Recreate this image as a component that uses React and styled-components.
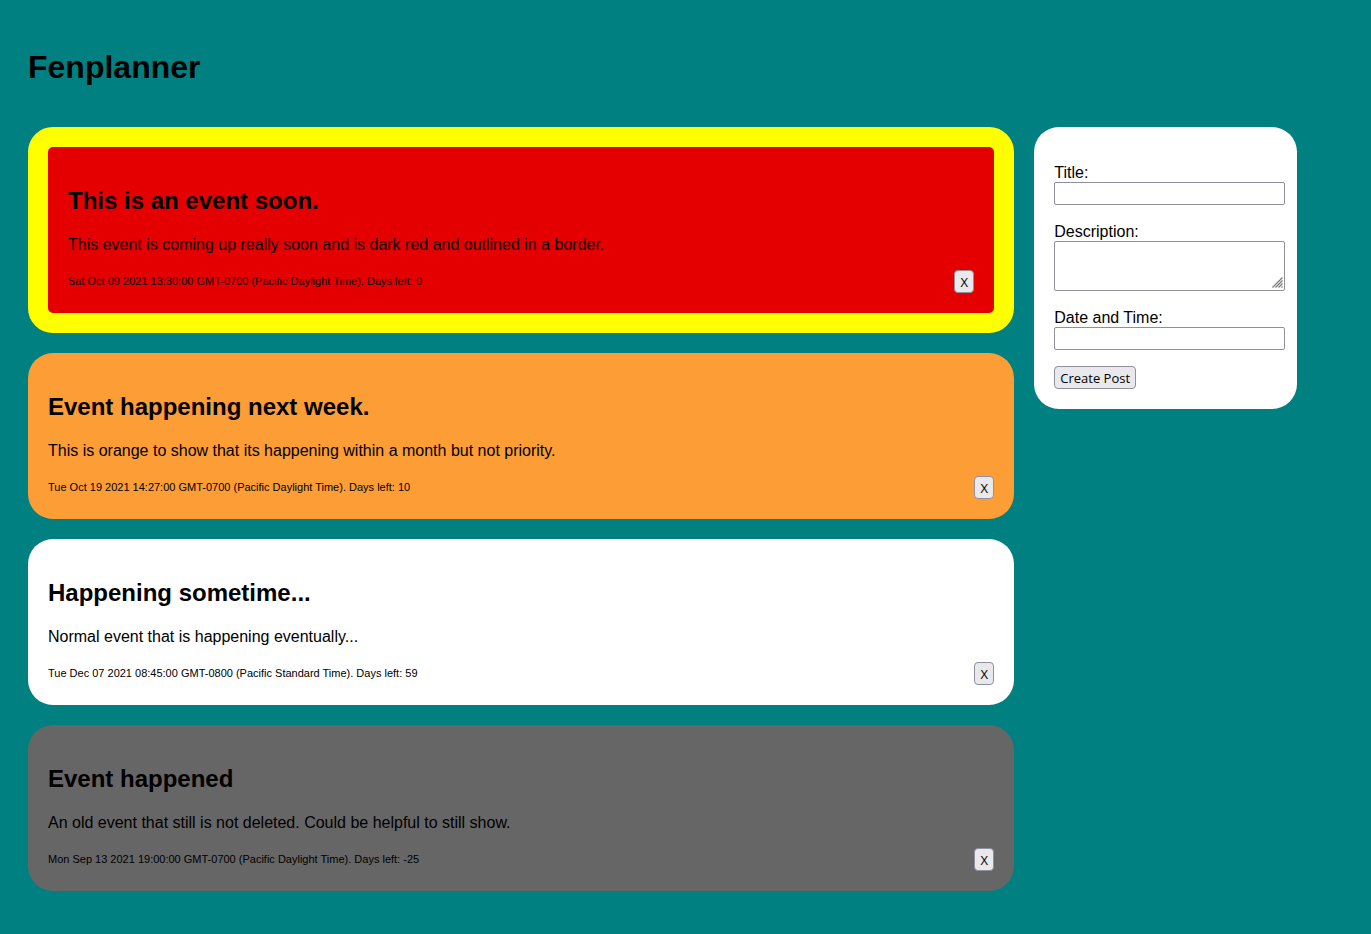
import React from "react";
import styled, { createGlobalStyle } from "styled-components";

const GlobalStyle = createGlobalStyle`
  body {
    margin: 8px;
    background: #008080;
    color: #000;
    font-family: "Liberation Sans", Arial, sans-serif;
    font-size: 16px;
    line-height: 19px;
  }
`;

const Page = styled.div`
  padding: 20px;
`;

const SiteTitle = styled.h1`
  margin: 21px 0 41px;
  font-size: 32px;
  line-height: 37px;
`;

const Columns = styled.div`
  display: flex;
  align-items: flex-start;
  gap: 20px;
`;

const EventList = styled.main`
  box-sizing: border-box;
  width: 75%;
  display: flex;
  flex-direction: column;
  gap: 20px;
`;

const tones = {
  soon: "#e40000",
  month: "#fd9d35",
  later: "#fff",
  past: "#666",
};

const EventCard = styled.article`
  padding: 20px;
  border: ${(p) => (p.$tone === "soon" ? "20px solid #ff0" : "none")};
  border-radius: 25px;
  background: ${(p) => tones[p.$tone]};
`;

const EventTitle = styled.h2`
  margin: 20px 0;
  font-size: 24px;
  line-height: 28px;
`;

const EventText = styled.p`
  margin: 0 0 16px;
`;

const EventFooter = styled.footer`
  display: flex;
  justify-content: space-between;
  align-items: center;
`;

const EventDate = styled.span`
  font-size: 11px;
`;

const Button = styled.button`
  box-sizing: border-box;
  height: 23px;
  min-width: 20px;
  padding: 1px 5px 0;
  border: 1px solid #8f8f9d;
  border-radius: 4px;
  background: #e9e9ed;
  color: #000;
  font-family: "Open Sans", "Noto Sans", sans-serif;
  font-size: 13px;
  line-height: 20px;
`;

const Sidebar = styled.aside`
  box-sizing: border-box;
  width: 20%;
  padding: 36px 20px 20px;
  border-radius: 25px;
  background: #fff;
`;

const Form = styled.form`
  display: flex;
  flex-direction: column;
  align-items: flex-start;
  gap: 16px;
`;

const Fields = styled.div`
  width: 100%;
  display: flex;
  flex-direction: column;
  gap: 17px;
`;

const Label = styled.label`
  display: block;
`;

const TextInput = styled.input`
  display: block;
  width: 100%;
  height: 19px;
  padding: 1px 3px;
  border: 1px solid #8f8f9d;
  border-radius: 2px;
  background: #fff;
  font: 13px "Noto Sans", sans-serif;
`;

const AreaWrap = styled.div`
  position: relative;
  width: calc(100% + 8px);
`;

const TextArea = styled.textarea`
  display: block;
  box-sizing: border-box;
  width: 100%;
  height: 50px;
  padding: 1px 3px;
  border: 1px solid #8f8f9d;
  border-radius: 2px;
  background: #fff;
  font: 13px "Liberation Mono", monospace;
  resize: vertical;

  &::-webkit-resizer {
    background: transparent;
  }
`;

const Grip = styled.svg`
  position: absolute;
  right: 2px;
  bottom: 3px;
  pointer-events: none;
`;

const events = [
  {
    tone: "soon",
    title: "This is an event soon.",
    text: "This event is coming up really soon and is dark red and outlined in a border.",
    date: "Sat Oct 09 2021 13:30:00 GMT-0700 (Pacific Daylight Time). Days left: 0",
  },
  {
    tone: "month",
    title: "Event happening next week.",
    text: "This is orange to show that its happening within a month but not priority.",
    date: "Tue Oct 19 2021 14:27:00 GMT-0700 (Pacific Daylight Time). Days left: 10",
  },
  {
    tone: "later",
    title: "Happening sometime...",
    text: "Normal event that is happening eventually...",
    date: "Tue Dec 07 2021 08:45:00 GMT-0800 (Pacific Standard Time). Days left: 59",
  },
  {
    tone: "past",
    title: "Event happened",
    text: "An old event that still is not deleted. Could be helpful to still show.",
    date: "Mon Sep 13 2021 19:00:00 GMT-0700 (Pacific Daylight Time). Days left: -25",
  },
];

export default function App() {
  return (
    <>
      <GlobalStyle />
      <Page>
        <SiteTitle>Fenplanner</SiteTitle>
        <Columns>
          <EventList>
            {events.map((e) => (
              <EventCard key={e.title} $tone={e.tone}>
                <EventTitle>{e.title}</EventTitle>
                <EventText>{e.text}</EventText>
                <EventFooter>
                  <EventDate>{e.date}</EventDate>
                  <Button type="button">X</Button>
                </EventFooter>
              </EventCard>
            ))}
          </EventList>
          <Sidebar>
            <Form onSubmit={(e) => e.preventDefault()}>
              <Fields>
                <div>
                  <Label htmlFor="title">Title:</Label>
                  <TextInput id="title" type="text" />
                </div>
                <div>
                  <Label htmlFor="description">Description:</Label>
                  <AreaWrap>
                    <TextArea id="description" />
                    <Grip width="11" height="11" viewBox="0 0 11 11" stroke="#777" strokeWidth="1.2" aria-hidden="true">
                      <path d="M0.5 10.5L10.5 0.5M3.5 10.5L10.5 3.5M6.5 10.5L10.5 6.5M9.5 10.5L10.5 9.5" />
                    </Grip>
                  </AreaWrap>
                </div>
                <div>
                  <Label htmlFor="datetime">Date and Time:</Label>
                  <TextInput id="datetime" type="text" />
                </div>
              </Fields>
              <Button type="submit">Create Post</Button>
            </Form>
          </Sidebar>
        </Columns>
      </Page>
    </>
  );
}
